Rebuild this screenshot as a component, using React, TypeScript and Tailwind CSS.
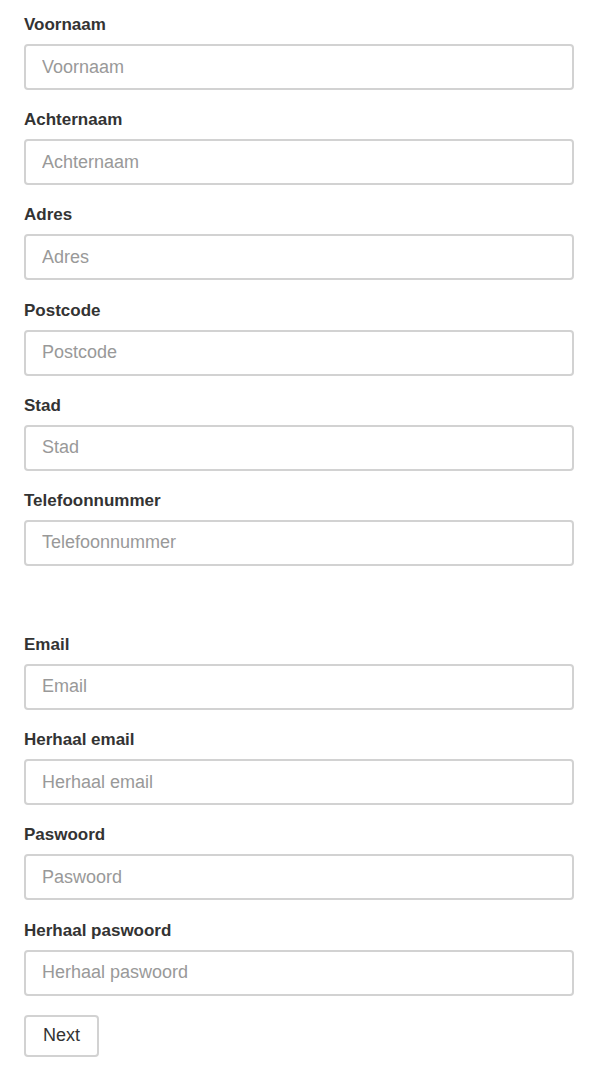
import React from 'react';

const personalFields = ['Voornaam', 'Achternaam', 'Adres', 'Postcode', 'Stad', 'Telefoonnummer'];
const accountFields = ['Email', 'Herhaal email', 'Paswoord', 'Herhaal paswoord'];

const Field: React.FC<{ label: string }> = ({ label }) => (
  <div className="flex flex-col">
    <label className="h-[20px] text-[17px] leading-[20px] font-bold text-[#333333]">{label}</label>
    <input
      type="text"
      placeholder={label}
      className="mt-[9px] h-[46px] w-full rounded-[4px] border-2 border-[#d2d2d2] bg-white px-[16px] text-[18px] text-[#333333] placeholder:text-[#999999] outline-none"
    />
  </div>
);

const App: React.FC = () => {
  return (
    <div
      className="w-[596px] min-h-[1074px] bg-white px-[24px] pt-[15px]"
      style={{ fontFamily: '"Liberation Sans", Arial, sans-serif' }}
    >
      <div className="w-[550px]">
        {/* persoonlijke gegevens */}
        <div className="flex flex-col gap-[20.2px]">
          {personalFields.map((f) => (
            <Field key={f} label={f} />
          ))}
        </div>

        {/* account */}
        <div className="mt-[69px] flex flex-col gap-[20.2px]">
          {accountFields.map((f) => (
            <Field key={f} label={f} />
          ))}
        </div>

        <button className="mt-[19px] h-[42px] rounded-[4px] border-2 border-[#d2d2d2] bg-white px-[17px] text-[18px] text-[#333333]">
          Next
        </button>
      </div>
    </div>
  );
};

export default App;
